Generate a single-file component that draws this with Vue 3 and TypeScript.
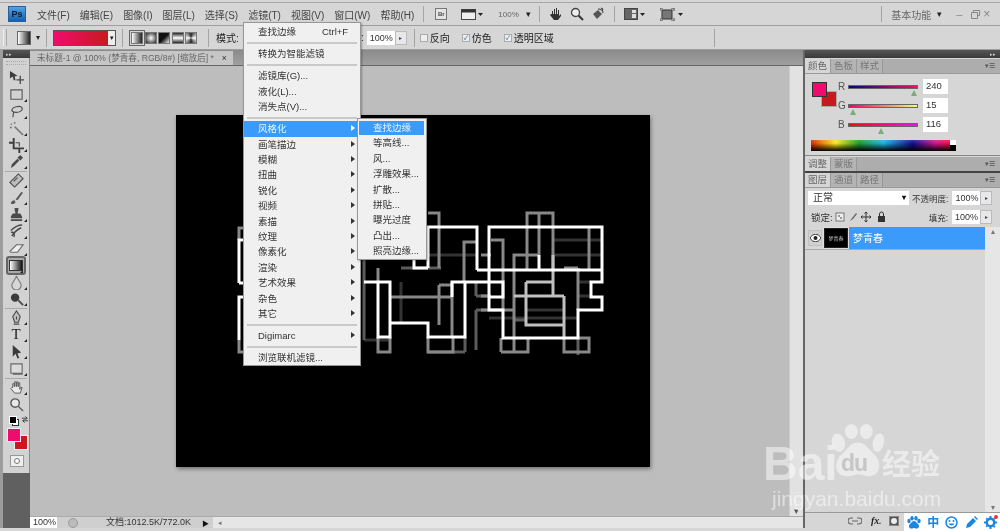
<template>
  <div class="app">
    <div class="appbar">
      <div class="ps-logo">Ps</div>
      <span v-for="m in menus" :key="m" class="menu-item">{{ m }}</span>
      <i class="vsep sep-a"></i>
      <span class="br-btn">Br</span>
      <svg class="ic-arr" width="22" height="12" viewBox="0 0 22 12">
        <rect x="0.5" y="1.5" width="14" height="10" fill="#eee" stroke="#444" />
        <rect x="0.5" y="1.5" width="14" height="3" fill="#333" />
        <path d="M17 5h5l-2.500 3z" fill="#222" />
      </svg>
      <span class="zoom-val">100%</span><span class="caret">▾</span>
      <i class="vsep sep-b"></i>
      <svg class="ic-tool hand" width="14" height="14" viewBox="0 0 14 14">
        <path d="M3 7V4h1v3h1V2h1v5h1V1h1v6h1V3h1v6l2-2v2l-3 4H5L1 8l1-1z" fill="#333" />
      </svg>
      <svg class="ic-tool mag" width="14" height="14" viewBox="0 0 14 14">
        <circle cx="5.500" cy="5.500" r="4" fill="#eee" stroke="#444" stroke-width="1.300" />
        <path d="M8.500 8.500l4.500 4.500" stroke="#333" stroke-width="2" />
      </svg>
      <svg class="ic-tool rot" width="14" height="14" viewBox="0 0 14 14">
        <path d="M2 7l5-4 4 4-5 5z" fill="#555" />
        <path d="M7 2c3 0 5 1 5 4M10 1l2 1-1 2" fill="none" stroke="#333" />
      </svg>
      <i class="vsep sep-c"></i>
      <svg class="ic-lay" width="22" height="12" viewBox="0 0 22 12">
        <rect x="0.500" y="0.500" width="13" height="11" fill="#666" stroke="#444" />
        <rect x="8" y="2" width="4" height="3" fill="#ddd" />
        <rect x="8" y="6" width="4" height="4" fill="#ddd" />
        <path d="M16 5h5l-2.500 3z" fill="#222" />
      </svg>
      <svg class="ic-scr" width="24" height="13" viewBox="0 0 24 13">
        <rect x="2" y="2" width="10" height="9" fill="#777" stroke="#333" />
        <path d="M0 3V0h3M11 0h3v3M0 10v3h3M14 10v3h-3" fill="none" stroke="#444" />
        <path d="M18 5h5l-2.500 3z" fill="#222" />
      </svg>
      <i class="vsep sep-d"></i>
      <span class="workspace">基本功能</span><span class="caret caret-w">▾</span>
      <span class="win-btn win-min">–</span>
      <svg class="win-res" width="9" height="9" viewBox="0 0 9 9">
        <path d="M2.500 2.500V.5h6v5h-2M.5 2.500h6v6h-6z" fill="none" stroke="#888" />
      </svg>
      <span class="win-btn win-x">×</span>
    </div>

    <div class="optbar">
      <span class="grip-v"></span>
      <span class="grad-ic"></span><span class="caret mini">▾</span>
      <i class="vsep o1"></i>
      <div class="grad-swatch"><span class="grad-fill"></span><span class="grad-drop">▾</span></div>
      <i class="vsep o2"></i>
      <div class="grad-types">
        <span v-for="g in gradTypes" :key="g" class="gt" :class="g"></span>
      </div>
      <i class="vsep o3"></i>
      <span class="opt-label">模式:</span>
      <span class="opt-op">:</span>
      <span class="num-box">100%</span><span class="stepper">▸</span>
      <i class="vsep o4"></i>
      <label class="chk first"><i></i>反向</label>
      <label class="chk on"><i>✓</i>仿色</label>
      <label class="chk on"><i>✓</i>透明区域</label>
      <i class="vsep o5"></i>
    </div>

    <div class="main">
      <div class="toolcol">
        <div class="tool-head">▸▸</div>
        <div class="tools">
          <div class="tool-grip"></div>
          <template v-for="(t, i) in tools" :key="i">
            <div v-if="t.sep" class="tool-sep"></div>
            <div class="tool" :class="{ active: t.active, fly: t.fly }">
              <span v-if="t.text" class="tool-t">{{ t.text }}</span>
              <span v-else-if="t.active" class="tool-grad"></span>
              <svg v-else width="15" height="15" viewBox="0 0 16 16">
                <path v-if="t.fill" :d="t.fill" :fill="t.color || '#222'" />
                <path v-if="t.line" :d="t.line" fill="none" :stroke="t.stroke || '#333'" :stroke-width="t.w || 1.200" />
              </svg>
            </div>
          </template>
          <div class="swap-row">
            <span class="mini-colors"><i class="b"></i><i class="a"></i></span>
            <svg width="9" height="9" viewBox="0 0 9 9"><path d="M1 3h6M5 1l2 2-2 2M8 6H2M4 4 2 6l2 2" fill="none" stroke="#333" /></svg>
          </div>
          <div class="fgbg"><i class="bgc"></i><i class="fgc"></i></div>
          <div class="qmask"><i></i></div>
        </div>
        <div class="tool-rest"></div>
      </div>

      <div class="docwrap">
        <div class="doctabs">
          <div class="doctab">未标题-1 @ 100% (梦青春, RGB/8#) [缩放后] *<span class="tab-x">×</span></div>
        </div>
        <div class="stage-row">
          <div class="stage">
            <div class="canvas">
              <svg width="474" height="352" viewBox="175 115 474 352">
                <path v-for="(a, i) in art" :key="i" :d="a.d" :stroke="a.c" :stroke-width="a.w || 3" fill="none" />
              </svg>
            </div>
          </div>
          <div class="vscroll"><span class="v-dn">▾</span></div>
        </div>
        <div class="statusbar">
          <span class="st-zoom">100%</span>
          <span class="st-ic"></span>
          <span class="st-doc">文档:1012.5K/772.0K</span>
          <span class="st-arrow">▶</span>
          <span class="st-scroll">◂</span>
        </div>
      </div>

      <div class="panels">
        <div class="panel-head">▸▸</div>
        <div class="tabrow">
          <span class="tab active">颜色</span><span class="tab">色板</span><span class="tab">样式</span>
          <span class="tabmenu">▾☰</span>
        </div>
        <div class="colorbox">
          <div class="cswatch"><i class="cbg"></i><i class="cfg"></i></div>
          <div class="sliders">
            <div v-for="s in sliders" :key="s.k" class="srow">
              <span class="skey">{{ s.k }}</span>
              <div class="strack" :class="s.cls">
                <i class="thumb" :style="{ left: s.pos + 'px' }"></i>
              </div>
              <span class="sval">{{ s.v }}</span>
            </div>
          </div>
          <div class="spectrum"><span class="spec-wb"></span></div>
        </div>
        <div class="tabrow row2">
          <span class="tab active">调整</span><span class="tab">蒙版</span>
          <span class="tabmenu">▾☰</span>
        </div>
        <div class="tabrow row3">
          <span class="tab active">图层</span><span class="tab">通道</span><span class="tab">路径</span>
          <span class="tabmenu">▾☰</span>
        </div>
        <div class="layerbox">
          <div class="lrow">
            <span class="blend">正常<b>▾</b></span>
            <span class="llabel narrow opacity-l">不透明度:</span>
            <span class="num-box small">100%</span><span class="stepper">▸</span>
          </div>
          <div class="lrow lock">
            <span class="llabel lock-l">锁定:</span>
            <svg width="54" height="12" viewBox="0 0 54 12">
              <rect x="1" y="2" width="8" height="8" fill="#eee" stroke="#777" />
              <rect x="3" y="4" width="2" height="2" fill="#999" /><rect x="5" y="6" width="2" height="2" fill="#999" />
              <path d="M15 10l2-3 4-5 1 1-4 5z" fill="#666" />
              <path d="M31 1v10M26 6h10M29.500 2.500 31 1l1.500 1.500M29.500 9.500 31 11l1.500-1.500M27.500 4.500 26 6l1.500 1.500M34.500 4.500 36 6l-1.500 1.500" fill="none" stroke="#333" />
              <rect x="43" y="5" width="7" height="6" fill="#333" /><path d="M44.500 5V3a2 2 0 0 1 4 0v2" fill="none" stroke="#333" />
            </svg>
            <span class="llabel narrow fill-l">填充:</span>
            <span class="num-box small">100%</span><span class="stepper">▸</span>
          </div>
          <div class="lists">
            <div class="layer-col">
              <div class="layer">
                <span class="eye">
                  <svg width="11" height="8" viewBox="0 0 11 8"><path d="M0 4c3-5 8-5 11 0-3 5-8 5-11 0z" fill="#fff" stroke="#333" /><circle cx="5.500" cy="4" r="2" fill="#222" /></svg>
                </span>
                <span class="thumb-l"><span>梦青春</span></span>
                <span class="lname">梦青春</span>
              </div>
            </div>
            <div class="lscroll"><span class="up">▴</span><span class="dn">▾</span></div>
          </div>
          <div class="lfoot">
            <svg width="14" height="8" viewBox="0 0 14 8"><path d="M5 1H3a3 3 0 0 0 0 6h2M9 1h2a3 3 0 0 1 0 6H9M4 4h6" fill="none" stroke="#666" stroke-width="1.200" /></svg>
            <span class="fx">fx<small>.</small></span>
            <span class="mask-ic"><i></i></span>
          </div>
        </div>
      </div>
    </div>

    <!-- 滤镜菜单 -->
    <div class="filter-menu">
      <template v-for="(it, i) in filterItems" :key="i">
        <div v-if="it.sep" class="m-sep"></div>
        <div v-else class="m-row" :class="{ hot: it.hot }">
          <span>{{ it.label }}</span>
          <span v-if="it.key" class="m-key">{{ it.key }}</span>
          <span v-if="it.sub" class="m-arrow"></span>
        </div>
      </template>
    </div>
    <div class="filter-sub">
      <div v-for="(s, i) in subItems" :key="s" class="s-row" :class="{ hot: i === 0 }">{{ s }}</div>
    </div>

    <!-- 水印 -->
    <div class="wm">
      <span class="wm-bai">Bai</span>
      <svg class="wm-paw" width="58" height="54" viewBox="0 0 62 58">
        <ellipse cx="11" cy="20" rx="7" ry="10" transform="rotate(-15 11 20)" />
        <ellipse cx="25" cy="8" rx="7" ry="8" />
        <ellipse cx="41" cy="8" rx="7" ry="8" />
        <ellipse cx="54" cy="20" rx="6" ry="10" transform="rotate(12 54 20)" />
        <path d="M32 20c8 0 11 7 17 12 9 8 8 24-5 24-5 0-8-2-12-2s-7 3-13 2C6 55 6 40 15 32c6-4 8-12 17-12z" />
      </svg>
      <span class="wm-du">du</span>
      <span class="wm-cn">经验</span>
      <span class="wm-url">jingyan.baidu.com</span>
    </div>

    <div class="ime">
      <svg width="14" height="13" viewBox="0 0 14 13">
        <ellipse cx="2" cy="5" rx="1.700" ry="2.300" /><ellipse cx="5" cy="2.300" rx="1.700" ry="2.300" />
        <ellipse cx="9" cy="2.300" rx="1.700" ry="2.300" /><ellipse cx="12" cy="5" rx="1.700" ry="2.300" />
        <path d="M7 5c2 0 2.500 2 4 3 2 2 1 5-2 4.500-1 0-1.300-.5-2-.5s-1 .5-2 .5c-3 .5-4-2.500-2-4.500 1.500-1 2-3 4-3z" />
      </svg>
      <span class="ime-zh">中</span>
      <svg width="13" height="13" viewBox="0 0 13 13"><circle cx="6.500" cy="6.500" r="5.500" fill="none" stroke="#1a86e0" stroke-width="1.500" /><path d="M3.500 7.500c1.500 2.500 4.500 2.500 6 0z" /><circle cx="4.500" cy="5" r="1" /><circle cx="8.500" cy="5" r="1" /></svg>
      <svg width="13" height="13" viewBox="0 0 13 13"><path d="M1 12l1-4 6-6 3 3-6 6zM9 1l1-1 3 3-1 1z" /></svg>
      <span class="ime-gear">
        <svg width="13" height="13" viewBox="0 0 13 13"><circle cx="6.500" cy="6.500" r="3.700" fill="none" stroke="#1a86e0" stroke-width="2.400" /><path d="M5.500 0h2v2h-2zM5.500 11h2v2h-2zM0 5.500h2v2H0zM11 5.500h2v2h-2zM1.500 3l1.500-1.500L4 3 3 4zM9 10l1-1 1.500 1.500-1.500 1.500zM9 3l1-1.500L11.500 3 10 4zM1.500 10 3 9l1 1-1.500 1.500z" /></svg>
        <i></i>
      </span>
    </div>
  </div>
</template>

<script setup lang="ts">
interface Tool {
  fill?: string
  line?: string
  color?: string
  stroke?: string
  w?: number
  text?: string
  sep?: boolean
  fly?: boolean
  active?: boolean
}

const menus = ['文件(F)', '编辑(E)', '图像(I)', '图层(L)', '选择(S)', '滤镜(T)', '视图(V)', '窗口(W)', '帮助(H)']
const gradTypes = ['g1', 'g2', 'g3', 'g4', 'g5']

const tools: Tool[] = [
  { fill: 'M1 1l8 5-3 1 1 4-2 0-1-4-3 2z', line: 'M12 6v9M8 10.500h8', w: 1.400 },
  { line: 'M2 3h12v10H2z', stroke: '#444', fly: true },
  { line: 'M3 7c0-4 9-6 11-3 1 3-3 5-6 5-2 0-4 0-5-2zM5 9c-1 2 0 3-1 5', fly: true },
  { line: 'M6 6l9 9M2 3l1 1M6 1v2M1 7h2', stroke: '#666', w: 1.600, fly: true },
  { fill: 'M4 0h2v10h10v2h-4v4h-2v-4H4V6H0V4h4z', line: 'M7 5h4v4', fly: true },
  { fill: 'M2 15l1-4 6-6 2 2-6 6zM9 4l3-3 3 3-3 3z', color: '#333', fly: true },
  { fill: 'M1 10l9-9 5 5-9 9z', color: '#bbb', line: 'M1 10l9-9 5 5-9 9zM5 9l4-4', sep: true, fly: true },
  { fill: 'M2 15c0-3 2-4 4-4l1 2c-1 2-3 2-5 2zM7 10l6-8 2 1-6 8z', color: '#444', fly: true },
  { fill: 'M6 1h4v2L9 7h3l2 3v2H2v-2l2-3h3L6 3zM2 13h12v2H2z', color: '#333', fly: true },
  { line: 'M2 7c4-4 8-6 12-6M3 13c2-4 6-7 10-9M2 9c3-1 5 2 3 5', stroke: '#333', w: 1.500, fly: true },
  { fill: 'M1 11l7-7h7l-6 8H2z', color: '#f4f4f4', line: 'M1 11l7-7h7l-6 8H2zM2 12h7', stroke: '#555', fly: true },
  { fly: true, active: true },
  { fill: 'M8 1c1 4 5 7 5 10a5 5 0 0 1-10 0c0-3 4-6 5-10z', color: '#d8d8d8', line: 'M8 1c1 4 5 7 5 10a5 5 0 0 1-10 0c0-3 4-6 5-10z', stroke: '#666', fly: true },
  { fill: 'M2 6a4.500 4.500 0 1 1 9 0 4.500 4.500 0 0 1-9 0z', line: 'M10 9l5 5', w: 2, fly: true },
  { fill: 'M7 1h2l3 6-2 6H6L4 7z', color: '#bbb', line: 'M8 1l4 6-2 6H6L4 7zM5 15h6M8 7v3', sep: true, fly: true },
  { text: 'T', fly: true },
  { fill: 'M4 1l9 8-4 1 2 5-2 .500-2-5-3 3z', fly: true },
  { fill: 'M2 3h12v10H2z', color: '#ddd', line: 'M2 3h12v10H2zM14 5v9H4', stroke: '#555', fly: true },
  { fill: 'M4 8V4h1.500v3H6V2h1.500v5H8V2h1.500v5h.5V3h1.500v7l1-2H14l-2 6H6L2 9l1-1z', color: '#eee', line: 'M4 8V4h1.500v3H6V2h1.500v5H8V2h1.500v5h.5V3h1.500v7l1-2H14l-2 6H6L2 9l1-1z', stroke: '#444', w: 1, sep: true, fly: true },
  { fill: 'M2 6.500a4.500 4.500 0 1 1 9 0 4.500 4.500 0 0 1-9 0z', color: '#eee', line: 'M2 6.500a4.500 4.500 0 1 1 9 0 4.500 4.500 0 0 1-9 0zM10 10l5 5', stroke: '#444', w: 1.500 },
]

const art = [
  { c: '#333', d: 'M360 255H475M552 240H601M552 255H601M525 310H563M577 282H590M577 296H590M488 318H577M400 282V322M363 340H389' },
  { c: '#5c5c5c', d: 'M363 260V340M427 352H464M464 337V352M475 310V350M475 310H485M475 296H485M475 282V296M577 355V338M400 268H440M513 320H525' },
  { c: '#888', d: 'M427 213H438V268M463 282V242H475M377 268V282M377 337V352H389V337M389 297H451M438 285H451M438 285V325M451 282V337M427 337V352H452V337M238 240V228H244M238 340V352H244' },
  { c: '#888', d: 'M526 270V213H552V270M538 213V255M588 227V270M490 240H502V310M513 352V255H538M500 352V338M500 352H527V338M563 338V352H588V338H577M577 268V310M563 268H577M480 255H490M480 296H490M480 310H513' },
  { c: '#c0c0c0', d: 'M525 282H552M525 282V325H563M513 296H563M552 255V296M563 296V338' },
  {
    c: '#fff',
    d: 'M427 268V227H476V270M413 255V268H427M476 270H601V282H590V297H601V310H577V338H502V310H488V227H601V270M480 282H502V297H488M538 255V270M363 282H377V337H389V323H427V337H464V282H451V297M389 337V282H377M451 282H464M464 282H500M238 283V240H244M238 283H244M238 340V297H244',
  },
]

const filterItems = [
  { label: '查找边缘', key: 'Ctrl+F' },
  { sep: true },
  { label: '转换为智能滤镜' },
  { sep: true },
  { label: '滤镜库(G)...' },
  { label: '液化(L)...' },
  { label: '消失点(V)...' },
  { sep: true },
  { label: '风格化', sub: true, hot: true },
  { label: '画笔描边', sub: true },
  { label: '模糊', sub: true },
  { label: '扭曲', sub: true },
  { label: '锐化', sub: true },
  { label: '视频', sub: true },
  { label: '素描', sub: true },
  { label: '纹理', sub: true },
  { label: '像素化', sub: true },
  { label: '渲染', sub: true },
  { label: '艺术效果', sub: true },
  { label: '杂色', sub: true },
  { label: '其它', sub: true },
  { sep: true },
  { label: 'Digimarc', sub: true },
  { sep: true },
  { label: '浏览联机滤镜...' },
]

const subItems = ['查找边缘', '等高线...', '风...', '浮雕效果...', '扩散...', '拼贴...', '曝光过度', '凸出...', '照亮边缘...']

const sliders = [
  { k: 'R', v: 240, cls: 'sr', pos: 62 },
  { k: 'G', v: 15, cls: 'sg', pos: 1 },
  { k: 'B', v: 116, cls: 'sb', pos: 29 },
]
</script>

<style>
html, body { margin: 0; background: #d6d6d6; }
</style>

<style scoped>
.app {
  position: relative;
  width: 1000px;
  height: 531px;
  overflow: hidden;
  display: flex;
  flex-direction: column;
  background: #d6d6d6;
  font-family: "Liberation Sans", "Noto Sans CJK SC", sans-serif;
  font-size: 10px;
  color: #333;
  filter: blur(0.45px);
}
i { font-style: normal; display: block; }

/* 顶部菜单栏 */
.appbar {
  height: 23px;
  margin-top: 2px;
  flex: none;
  display: flex;
  align-items: center;
  border-top: 1px solid #a8a8a8;
  padding-left: 8px;
  box-sizing: border-box;
  white-space: nowrap;
}
.ps-logo {
  width: 18px;
  height: 16px;
  margin-right: 11px;
  background: linear-gradient(#4fa4ea, #1560b0);
  border: 1px solid #2a5e96;
  box-sizing: border-box;
  color: #0c1c30;
  font: bold 9px/14px "Liberation Sans", sans-serif;
  text-align: center;
}
.menu-item { margin-right: 10px; flex: none; color: #444; }
.vsep { width: 1px; background: #a4a4a4; flex: none; height: 16px; }
.sep-a { margin-left: -1px; margin-right: 11px; }
.br-btn {
  width: 12px;
  height: 12px;
  border: 1px solid #777;
  box-sizing: border-box;
  font: bold 6px/10px "Liberation Sans", sans-serif;
  color: #444;
  text-align: center;
  margin-right: 14px;
  background: #e4e4e4;
}
.ic-arr { margin-right: 15px; }
.zoom-val { width: 26px; font-size: 8px; color: #666; }
.caret { font-size: 9px; color: #222; margin-left: 2px; }
.sep-b { margin-left: 8px; margin-right: 9px; }
.ic-tool { margin-right: 7px; }
.sep-c { margin-left: 2px; margin-right: 9px; }
.ic-lay { margin-right: 14px; }
.sep-d { margin-left: 197px; margin-right: 9px; }
.workspace { width: 40px; color: #666; font-size: 10px; }
.caret-w { margin-left: 6px; margin-right: 14px; }
.win-btn { color: #888; font-size: 11px; width: 11px; }
.win-res { margin: 0 3px 0 4px; }
.win-x { font-size: 12px; }

/* 选项栏 */
.optbar {
  height: 25px;
  flex: none;
  display: flex;
  align-items: center;
  border-top: 1px solid #9e9e9e;
  border-bottom: 1px solid #9e9e9e;
  box-sizing: border-box;
  padding-left: 3px;
}
.grip-v { width: 2px; height: 17px; border-left: 1px solid #eee; border-right: 1px solid #aaa; margin-right: 10px; }
.grad-ic { width: 12px; height: 12px; border: 1px solid #666; background: linear-gradient(to right, #fff, #222); margin-right: 3px; }
.mini { font-size: 8px; }
.o1 { margin-left: 6px; margin-right: 6px; height: 18px; }
.grad-swatch { display: flex; width: 63px; height: 16px; border: 1px solid #555; box-sizing: border-box; background: #fff; }
.grad-fill { flex: 1; background: linear-gradient(to right, #f00c6c, #c81a1e); }
.grad-drop { width: 7px; font-size: 7px; line-height: 14px; text-align: center; color: #111; background: #eee; }
.o2 { margin-left: 6px; margin-right: 8px; height: 18px; }
.grad-types { display: flex; gap: 1.500px; width: 66px; }
.gt { width: 12px; height: 12px; border: 1px solid #777; box-sizing: border-box; }
.g1 { background: linear-gradient(to right, #fff, #222); outline: 1px solid #666; outline-offset: 1px; }
.g2 { background: radial-gradient(#fff, #222); }
.g3 { background: linear-gradient(135deg, #111 50%, #eee); }
.g4 { background: linear-gradient(#222, #fff, #222); }
.g5 { background: conic-gradient(#222, #fff, #222, #fff, #222); }
.o3 { margin-left: 11px; margin-right: 7px; height: 18px; }
.opt-label { width: 145px; font-size: 10px; color: #222; }
.opt-op { margin-right: 3px; }
.num-box {
  width: 28px;
  height: 14px;
  background: #fff;
  font-size: 9px;
  line-height: 14px;
  padding-left: 3px;
  box-sizing: border-box;
  color: #333;
}
.stepper {
  width: 12px;
  height: 14px;
  background: #e8e8e8;
  border: 1px solid #bbb;
  box-sizing: border-box;
  font-size: 6px;
  line-height: 12px;
  text-align: center;
  color: #447;
}
.o4 { margin-left: 7px; margin-right: 5px; height: 18px; }
.chk { display: flex; align-items: center; gap: 2px; margin-right: 12px; font-size: 10px; color: #222; }
.chk i {
  width: 8px;
  height: 8px;
  box-sizing: border-box;
  background: #eee;
  border: 1px solid #aaa;
  font-size: 6px;
  line-height: 6px;
  text-align: center;
  color: #24a;
}
.o5 { margin-left: 148px; height: 18px; }

/* 主体 */
.main { flex: 1; display: flex; min-height: 0; margin-bottom: 3px; }
.toolcol {
  width: 30px;
  flex: none;
  padding-left: 3px;
  box-sizing: border-box;
  background: #9c9c9c;
  display: flex;
  flex-direction: column;
}
.tool-head {
  height: 8px;
  background: linear-gradient(#555, #3a3a3a);
  color: #ccc;
  font-size: 5px;
  line-height: 8px;
  padding-left: 3px;
}
.tools {
  height: 415px;
  flex: none;
  background: #d2d2d2;
  border-right: 1px solid #888;
  box-sizing: border-box;
}
.tool-grip { height: 2px; margin: 3px 3px 4px; border-top: 1px dotted #aaa; border-bottom: 1px dotted #aaa; }
.tool { position: relative; height: 16.900px; display: flex; align-items: center; justify-content: center; }
.tool svg { opacity: .85; }
.tool.fly::after {
  content: "";
  position: absolute;
  right: 2px;
  bottom: 1px;
  border-left: 3px solid transparent;
  border-bottom: 3px solid #222;
}
.tool.active { margin: 0 4px; outline: 2px solid #666; outline-offset: -1px; border-radius: 2px; background: #aaa; }
.tool-grad { width: 14px; height: 11px; box-sizing: border-box; background: linear-gradient(to right, #fff, #111); border: 1px solid #333; }
.tool-t { font: 15px/17px "Liberation Serif", serif; color: #222; }
.tool-sep { height: 1px; margin: 1px 2px 0; background: #aaa; }
.swap-row { display: flex; align-items: center; gap: 5px; margin: 1px 0 0 6px; height: 12px; }
.mini-colors { position: relative; width: 8px; height: 8px; display: block; }
.mini-colors .a { position: absolute; left: 0; top: 0; width: 6px; height: 6px; background: #000; border: 1px solid #fff; }
.mini-colors .b { position: absolute; left: 3px; top: 3px; width: 5px; height: 5px; background: #fff; border: 1px solid #333; }
.fgbg { position: relative; height: 23px; margin: 2px 0 0 4px; }
.fgbg .bgc { position: absolute; left: 7px; top: 7px; width: 14px; height: 15px; background: #c81a1e; border: 1px solid #eee; box-sizing: border-box; }
.fgbg .fgc { position: absolute; left: 0; top: 0; width: 14px; height: 14px; background: #f00c6c; border: 1px solid #eee; box-sizing: border-box; }
.qmask { width: 14px; height: 12px; margin: 4px 0 0 7px; border: 1px solid #999; background: #eee; box-sizing: border-box; display: flex; align-items: center; justify-content: center; }
.qmask i { width: 6px; height: 6px; border-radius: 50%; background: #fff; border: 1px solid #777; box-sizing: border-box; }
.tool-rest { flex: 1; background: #606060; }

/* 文档区 */
.docwrap { width: 773px; flex: none; display: flex; flex-direction: column; border-right: 2px solid #666; }
.doctabs {
  height: 15px;
  flex: none;
  background: linear-gradient(#8a8a8a, #a0a0a0);
  border-bottom: 1px solid #666;
  display: flex;
  align-items: flex-end;
}
.doctab {
  height: 14px;
  width: 203px;
  padding-left: 7px;
  box-sizing: border-box;
  background: #c6c6c6;
  color: #666;
  font-size: 8.600px;
  line-height: 14px;
  white-space: nowrap;
}
.tab-x { margin-left: 8px; color: #333; }
.stage-row { flex: 1; display: flex; min-height: 0; }
.stage { flex: 1; display: flex; align-items: center; justify-content: center; background: #bdbdbd; }
.canvas { width: 474px; height: 352px; margin: 0 0 0 6px; background: #000; box-shadow: 1px 2px 4px rgba(0,0,0,.4); flex: none; }
.canvas svg { display: block; }
.vscroll { width: 14px; flex: none; background: #e2e2e2; border-left: 1px solid #ccc; box-sizing: border-box; display: flex; flex-direction: column; justify-content: flex-end; align-items: center; color: #555; font-size: 9px; }
.statusbar { height: 11px; flex: none; display: flex; align-items: center; background: #cfcfcf; border-top: 1px solid #aaa; font-size: 9px; }
.st-zoom { width: 27px; height: 11px; background: #fff; padding-left: 3px; box-sizing: border-box; line-height: 11px; }
.st-ic { width: 8px; height: 8px; margin-left: 11px; border-radius: 50%; border: 1px solid #999; background: #bbb; }
.st-doc { margin-left: 11px; width: 110px; padding-left: 17px; box-sizing: border-box; white-space: nowrap; line-height: 11px; }
.st-arrow { width: 8px; margin-left: 3px; font-size: 7px; color: #111; margin-right: 3px; }
.st-scroll { flex: 1; height: 11px; background: #e6e6e6; font-size: 7px; line-height: 11px; padding-left: 5px; color: #777; }

/* 右侧面板 */
.panels { flex: 1; display: flex; flex-direction: column; min-width: 0; }
.panel-head { height: 8px; flex: none; background: linear-gradient(#555, #3a3a3a); color: #ccc; font-size: 5px; line-height: 8px; text-align: right; padding-right: 4px; }
.tabrow { height: 14px; margin-top: 1px; flex: none; display: flex; background: #adadad; position: relative; border-bottom: 1px solid #999; }
.tab { width: 25px; text-align: center; font-size: 9.500px; line-height: 13px; color: #777; border-right: 1px solid #999; background: #b4b4b4; }
.tab.active { background: #d6d6d6; color: #666; height: 14px; }
.tabmenu { position: absolute; right: 5px; top: 0; font-size: 7px; line-height: 13px; color: #555; }
.colorbox { position: relative; height: 81px; flex: none; border-bottom: 1px solid #888; background: #d6d6d6; }
.cswatch { position: absolute; left: 6px; top: 8px; width: 24px; height: 24px; }
.cbg { position: absolute; left: 10px; top: 9px; width: 14px; height: 14px; background: #c81a1e; border: 1px solid #aaa; }
.cfg { position: absolute; left: 1px; top: 0; width: 13px; height: 13px; background: #f00c6c; border: 1px solid #333; }
.sliders { position: absolute; left: 33px; top: 3px; }
.srow { display: flex; align-items: center; height: 19px; }
.skey { width: 10px; color: #555; font-size: 10px; text-align: left; }
.strack { position: relative; width: 70px; height: 4px; border: 0.500px solid #666; box-sizing: border-box; margin-right: 5px; }
.sr { background: linear-gradient(to right, #00096c, #f00c6c); }
.sg { background: linear-gradient(to right, #f0006c, #f0ff74); }
.sb { background: linear-gradient(to right, #f00f00, #f00fff); }
.thumb { position: absolute; top: 4px; width: 0; height: 0; border-left: 3.500px solid transparent; border-right: 3.500px solid transparent; border-bottom: 6px solid #7cab7c; }
.sval { width: 25px; height: 15px; background: #fff; padding-left: 3px; box-sizing: border-box; font-size: 9.500px; line-height: 14px; color: #333; }
.spectrum {
  position: absolute;
  left: 6px;
  top: 66px;
  width: 145px;
  height: 11px;
  background:
    linear-gradient(to bottom, rgba(255, 255, 255, .15), rgba(0, 0, 0, 0) 30%, #000 100%),
    linear-gradient(to right, #d82a00, #f7e91c 17%, #1f9a2c 33%, #1fb0e0 50%, #10108a 70%, #d0148c 86%, #f00c3c 96%);
}
.spec-wb { position: absolute; right: 0; top: 0; width: 6px; height: 11px; background: linear-gradient(#fff 50%, #000 50%); }
.row2 { margin-top: 1px; border-bottom: 2px solid #444; }
.row3 { margin-top: 0; }
.layerbox { flex: 1; display: flex; flex-direction: column; min-height: 0; background: #d6d6d6; }
.lrow { display: flex; align-items: center; height: 19px; padding-left: 3px; flex: none; white-space: nowrap; }
.blend { position: relative; width: 101px; height: 14px; background: #fff; padding-left: 5px; box-sizing: border-box; line-height: 14px; }
.blend b { position: absolute; right: 3px; top: 0; font-size: 8px; color: #111; }
.llabel { color: #333; font-size: 9.500px; }
.narrow { font-size: 8.500px; }
.opacity-l { margin: 0 4px 0 3px; }
.lrow .small { width: 28px; }
.lock-l { margin-left: 3px; }
.lock svg { margin: 0 0 0 2px; }
.fill-l { margin-left: 40px; margin-right: 4px; }
.lists { flex: 1; display: flex; margin-top: 1px; border-bottom: 1px solid #999; min-height: 0; }
.layer-col { flex: 1; }
.layer { display: flex; align-items: center; height: 22px; border-bottom: 1px solid #aaa; background: linear-gradient(to right, #d6d6d6 19px, #3a9bfa 19px); }
.eye { width: 14px; height: 16px; margin: 0 2px 0 3px; background: #d0d0d0; border: 1px solid #c0c0c0; box-sizing: border-box; display: flex; align-items: center; justify-content: center; }
.thumb-l { width: 24px; height: 20px; background: #000; border: 1px solid #222; outline: 1px solid #ddd; box-sizing: border-box; color: #ccc; font-size: 5px; line-height: 18px; text-align: center; white-space: nowrap; overflow: hidden; }
.lname { flex: 1; padding-left: 5px; color: #fff; line-height: 21px; font-size: 10px; }
.lscroll { width: 15px; flex: none; background: #e6e6e6; display: flex; flex-direction: column; justify-content: space-between; align-items: center; font-size: 8px; color: #777; }
.lfoot { height: 15px; flex: none; display: flex; align-items: center; padding-left: 43px; gap: 9px; }
.fx { font: italic bold 10px "Liberation Serif", serif; color: #222; margin-right: -1px; }
.fx small { font-size: 8px; }
.mask-ic { width: 10px; height: 10px; border: 1px solid #888; box-sizing: border-box; background: #555; display: flex; align-items: center; justify-content: center; }
.mask-ic i { width: 6px; height: 6px; border-radius: 50%; background: #eee; }

/* 菜单 */
.filter-menu {
  position: absolute;
  left: 243px;
  top: 22px;
  width: 118px;
  height: 344px;
  padding-top: 1px;
  box-sizing: border-box;
  background: #f0f0f0;
  border: 1px solid #979797;
  box-shadow: 1px 1px 2px rgba(0, 0, 0, .3);
  font-size: 9.500px;
  color: #333;
}
.m-row { position: relative; height: 15.400px; line-height: 15px; padding-left: 14px; margin-right: 3px; display: flex; white-space: nowrap; }
.m-row.hot { background: #3a9bfa; color: #e8f3ff; }
.m-key { position: absolute; left: 78px; font-size: 9.500px; }
.m-arrow { position: absolute; right: 2px; top: 4px; border-left: 4px solid #333; border-top: 3px solid transparent; border-bottom: 3px solid transparent; }
.hot .m-arrow { border-left-color: #fff; }
.m-sep { height: 2px; margin: 2.400px 3px; background: #c9c9c9; }
.filter-sub {
  position: absolute;
  left: 357px;
  top: 118px;
  width: 70px;
  height: 142px;
  padding: 2px 2px 0 1px;
  box-sizing: border-box;
  background: #f0f0f0;
  border: 1px solid #979797;
  box-shadow: 1px 1px 2px rgba(0, 0, 0, .3);
  font-size: 9.500px;
  color: #333;
}
.s-row { height: 15.400px; line-height: 14px; padding-left: 14px; white-space: nowrap; }
.s-row.hot { height: 13.500px; margin-bottom: 1.900px; background: #3a9bfa; color: #e8f3ff; }

/* 水印 */
.wm { position: absolute; left: 760px; top: 422px; width: 200px; height: 100px; color: rgba(255, 255, 255, .5); pointer-events: none; }
.wm-bai { position: absolute; left: 3px; top: 18px; font: bold 48px/1 "Liberation Sans", sans-serif; }
.wm-paw { position: absolute; left: 68px; top: 2px; fill: rgba(255, 255, 255, .5); }
.wm-du { position: absolute; left: 81px; top: 30px; font: bold 23px/1 "Liberation Sans", sans-serif; color: #c6c6c6; letter-spacing: -1px; }
.wm-cn { position: absolute; left: 122px; top: 25px; font: bold 29px/1.100 "Noto Sans CJK SC", sans-serif; white-space: nowrap; }
.wm-url { position: absolute; left: 12px; top: 66px; font: 21px/1 "Liberation Sans", sans-serif; white-space: nowrap; }
.ime {
  position: absolute;
  right: 0;
  bottom: 0;
  width: 96px;
  height: 18px;
  padding: 0 3px 0 3px;
  box-sizing: border-box;
  background: #fff;
  display: flex;
  align-items: center;
  justify-content: space-between;
  fill: #1a86e0;
  color: #1a86e0;
}
.ime svg { display: block; }
.ime-zh { font: bold 12px/1 "Noto Sans CJK SC", sans-serif; }
.ime-gear { position: relative; display: block; }
.ime-gear i { position: absolute; right: -1px; top: -1px; width: 4px; height: 4px; border-radius: 50%; background: #f03030; }
</style>
